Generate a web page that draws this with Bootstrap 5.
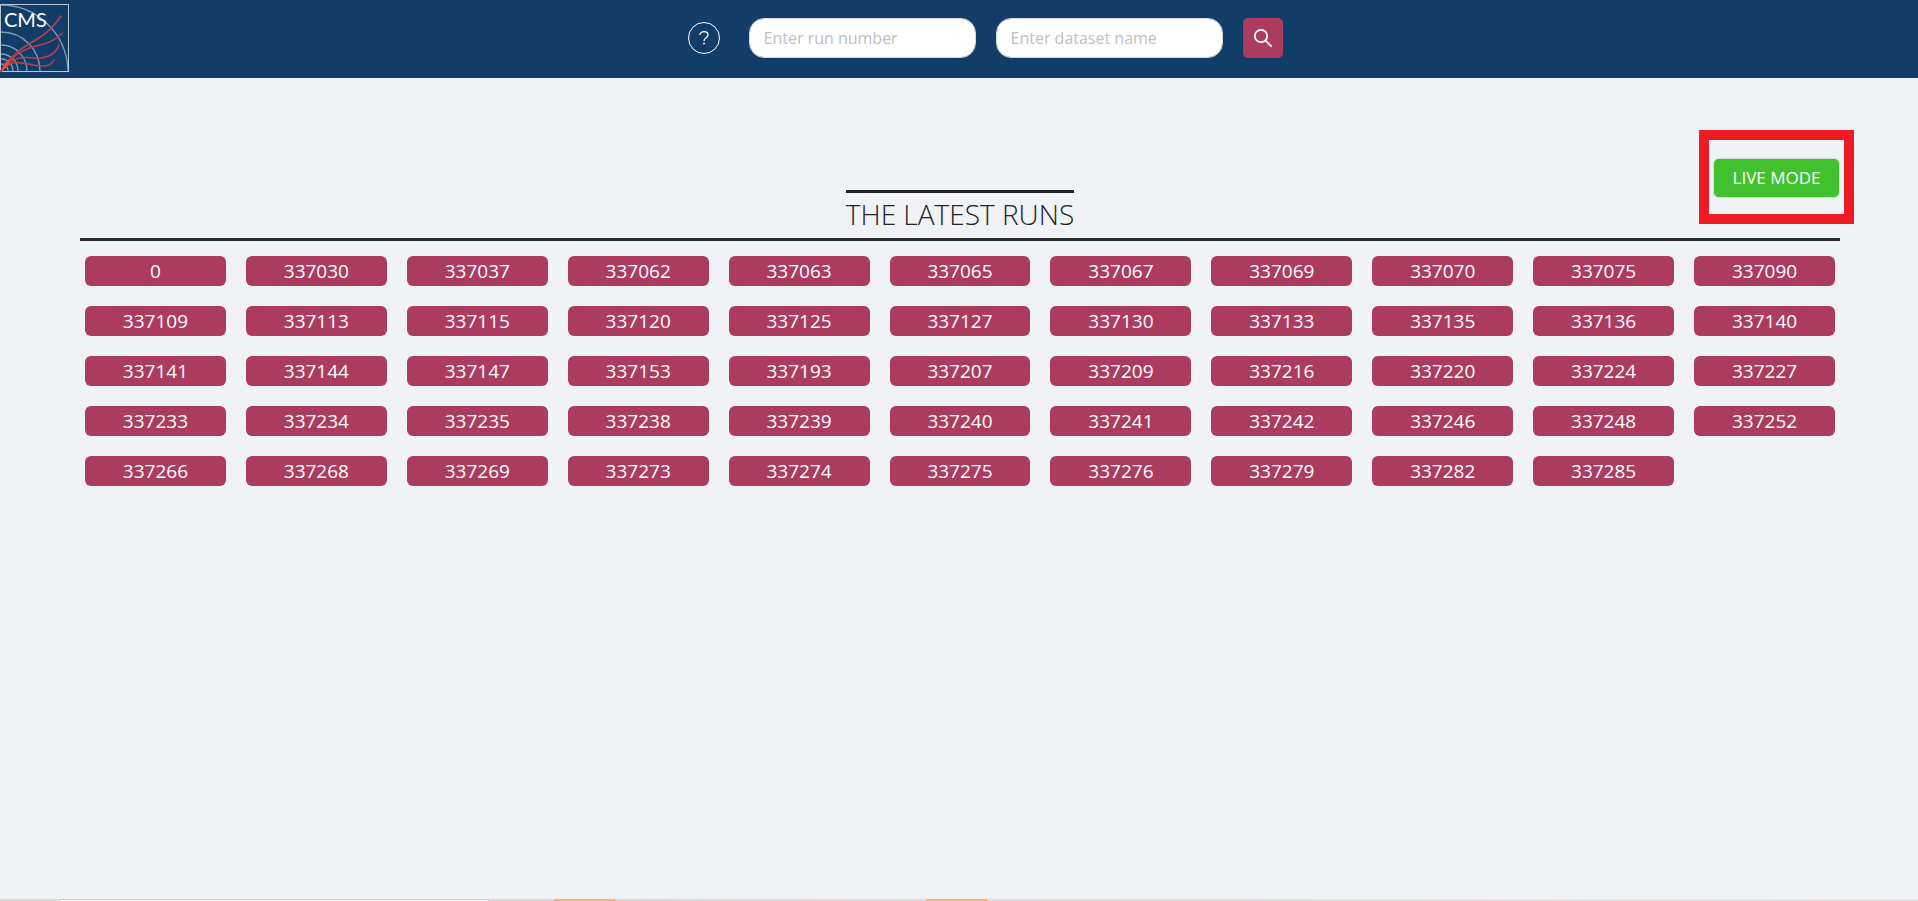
<!DOCTYPE html>
<html lang="en">
<head>
<meta charset="utf-8">
<meta name="viewport" content="width=device-width, initial-scale=1">
<title>CMS – The latest runs</title>
<link href="https://cdn.jsdelivr.net/npm/bootstrap@5.3.0/dist/css/bootstrap.min.css" rel="stylesheet">
<style>
  body { background: #f0f2f5; font-family: "Open Sans", "Noto Sans", sans-serif; color: #212529; }
  .topbar { background: #133d69; height: 78px; }
  .search-area { padding: 0 18px 2px 0; }
  .help-btn { width: 32px; height: 32px; margin-right: 29px; border: 1px solid #fff; border-radius: 50%; background: none; color: #fff; }
  .search-fields { gap: 20px; }
  .search-input { width: 227px; height: 40px; border-radius: 15px; border: 1px solid #d9d9d9; padding: 4px 14px; font-size: 16px; }
  .search-input::placeholder { color: #bfbfbf; opacity: 1; }
  .search-btn { width: 40px; height: 40px; background: #ab3c60; border-radius: 5px; color: #fff; }
  .page { padding: 52px 78px 0 80px; }
  .heading-row { display: grid; grid-template-columns: 1fr auto 1fr; border-bottom: 3px solid #2a2b2e; }
  .page-title { grid-column: 2; border-top: 3px solid #212529; padding-bottom: 2px; font-size: 28px; font-weight: 300; line-height: 43px; }
  .live-frame { border: 10px solid #ed1c24; padding: 18px 4px 16px; margin: 0 -14px 14px 0; }
  .live-btn { width: 127px; height: 40px; background: #42c12f; border: 1px solid #d9d9d9; border-radius: 6px; color: #fff; font-size: 17px; }
  .run-grid { display: grid; grid-template-columns: repeat(11, 1fr); gap: 20px; padding: 15px 5px; }
  .run-btn { height: 30px; background: #ab3c60; border-radius: 6px; color: #fff; font-size: 19px; line-height: 30px; }
  .btn:hover { color: #fff; background: #8f2f4e; }
  .live-btn:hover { background: #37a527; }
  .bottom-strip { height: 2px; background: linear-gradient(90deg, #e2d5d3 0 61px, #c8c8c8 61px 489px, #e2d5d3 489px 554px, #fdb074 554px 615px, #e3d5d4 615px, #ecd5c8 830px, #e7d9d2 926px, #fdb074 926px 987px, #dddadd 987px, #dfe3dc 1400px, #efe2d3 1640px, #e7e2d8); }
  .bottom-strip::before { content: ""; display: block; width: 427px; height: 2px; margin-left: 61px; border-top: 1px solid #c8c8c8; background: #fff; }
</style>
</head>
<body class="d-flex flex-column min-vh-100">
<header class="topbar d-flex align-items-center">
  <a href="#" aria-label="CMS home" class="d-flex">
    <svg width="70" height="70" viewBox="0 0 70 70" fill="none">
      <g stroke="#7f9cbb" stroke-width="1.3">
        <path d="M1 28A39 39 0 0 1 40 67M1 41A26 26 0 0 1 27 67M1 50A17 17 0 0 1 18 67M1 55A12 12 0 0 1 13 67M1 60A7 7 0 0 1 8 67M1 1C36 1 67 29 68 67"/>
      </g>
      <rect x=".5" y=".5" width="68" height="67" stroke="#b5c5d6"/>
      <g stroke="#b64247" stroke-width="1.5" stroke-linecap="round">
        <path d="M1 67C12 50 22 44 34 37S53 24 61 12"/><path d="M1 67C12 51 24 45 36 42S55 37 62 29"/><path d="M1 67C14 51 24 53 34 54S55 52 59 41"/><path d="M1 67C12 54 22 59 33 61S50 63 54 56"/>
      </g>
      <path d="M1 68L4 60L10 54L8 62Z" fill="#ee4933"/>
      <text x="4" y="23" fill="#fff" font-family="Lato, sans-serif" font-size="20">CMS</text>
    </svg>
  </a>
  <form class="search-area d-flex flex-fill justify-content-center align-items-center" onsubmit="return false">
    <button type="button" class="help-btn d-flex align-items-center justify-content-center p-0" aria-label="Help">
      <svg width="14" height="16" viewBox="0 0 14 16" fill="none" stroke="currentColor" stroke-width="1.3"><path d="M3 5C3 .5 11 .5 11 5C11 8 7 7.500 7 11"/><circle cx="7" cy="13.500" r=".9" fill="currentColor" stroke="none"/></svg>
    </button>
    <div class="d-flex search-fields">
      <input type="text" class="form-control search-input" placeholder="Enter run number" aria-label="Run number">
      <input type="text" class="form-control search-input" placeholder="Enter dataset name" aria-label="Dataset name">
      <button type="submit" class="btn search-btn border-0 p-0 d-flex align-items-center justify-content-center" aria-label="Search">
        <svg width="20" height="20" viewBox="0 0 20 20" fill="none" stroke="currentColor" stroke-width="1.8"><circle cx="8" cy="8" r="6.200"/><path d="M12.300 12.300L18.700 18.700"/></svg>
      </button>
    </div>
  </form>
</header>
<main class="page flex-grow-1">
  <div class="heading-row">
    <h1 class="page-title mb-0 align-self-end">THE LATEST RUNS</h1>
    <div class="live-frame ms-auto"><button type="button" class="btn live-btn p-0 d-block">LIVE MODE</button></div>
  </div>
  <div class="run-grid">
    <button class="btn run-btn border-0 p-0">0</button>
    <button class="btn run-btn border-0 p-0">337030</button>
    <button class="btn run-btn border-0 p-0">337037</button>
    <button class="btn run-btn border-0 p-0">337062</button>
    <button class="btn run-btn border-0 p-0">337063</button>
    <button class="btn run-btn border-0 p-0">337065</button>
    <button class="btn run-btn border-0 p-0">337067</button>
    <button class="btn run-btn border-0 p-0">337069</button>
    <button class="btn run-btn border-0 p-0">337070</button>
    <button class="btn run-btn border-0 p-0">337075</button>
    <button class="btn run-btn border-0 p-0">337090</button>
    <button class="btn run-btn border-0 p-0">337109</button>
    <button class="btn run-btn border-0 p-0">337113</button>
    <button class="btn run-btn border-0 p-0">337115</button>
    <button class="btn run-btn border-0 p-0">337120</button>
    <button class="btn run-btn border-0 p-0">337125</button>
    <button class="btn run-btn border-0 p-0">337127</button>
    <button class="btn run-btn border-0 p-0">337130</button>
    <button class="btn run-btn border-0 p-0">337133</button>
    <button class="btn run-btn border-0 p-0">337135</button>
    <button class="btn run-btn border-0 p-0">337136</button>
    <button class="btn run-btn border-0 p-0">337140</button>
    <button class="btn run-btn border-0 p-0">337141</button>
    <button class="btn run-btn border-0 p-0">337144</button>
    <button class="btn run-btn border-0 p-0">337147</button>
    <button class="btn run-btn border-0 p-0">337153</button>
    <button class="btn run-btn border-0 p-0">337193</button>
    <button class="btn run-btn border-0 p-0">337207</button>
    <button class="btn run-btn border-0 p-0">337209</button>
    <button class="btn run-btn border-0 p-0">337216</button>
    <button class="btn run-btn border-0 p-0">337220</button>
    <button class="btn run-btn border-0 p-0">337224</button>
    <button class="btn run-btn border-0 p-0">337227</button>
    <button class="btn run-btn border-0 p-0">337233</button>
    <button class="btn run-btn border-0 p-0">337234</button>
    <button class="btn run-btn border-0 p-0">337235</button>
    <button class="btn run-btn border-0 p-0">337238</button>
    <button class="btn run-btn border-0 p-0">337239</button>
    <button class="btn run-btn border-0 p-0">337240</button>
    <button class="btn run-btn border-0 p-0">337241</button>
    <button class="btn run-btn border-0 p-0">337242</button>
    <button class="btn run-btn border-0 p-0">337246</button>
    <button class="btn run-btn border-0 p-0">337248</button>
    <button class="btn run-btn border-0 p-0">337252</button>
    <button class="btn run-btn border-0 p-0">337266</button>
    <button class="btn run-btn border-0 p-0">337268</button>
    <button class="btn run-btn border-0 p-0">337269</button>
    <button class="btn run-btn border-0 p-0">337273</button>
    <button class="btn run-btn border-0 p-0">337274</button>
    <button class="btn run-btn border-0 p-0">337275</button>
    <button class="btn run-btn border-0 p-0">337276</button>
    <button class="btn run-btn border-0 p-0">337279</button>
    <button class="btn run-btn border-0 p-0">337282</button>
    <button class="btn run-btn border-0 p-0">337285</button>
  </div>
</main>
<footer class="bottom-strip"></footer>
<script src="https://cdn.jsdelivr.net/npm/bootstrap@5.3.0/dist/js/bootstrap.bundle.min.js"></script>
</body>
</html>
